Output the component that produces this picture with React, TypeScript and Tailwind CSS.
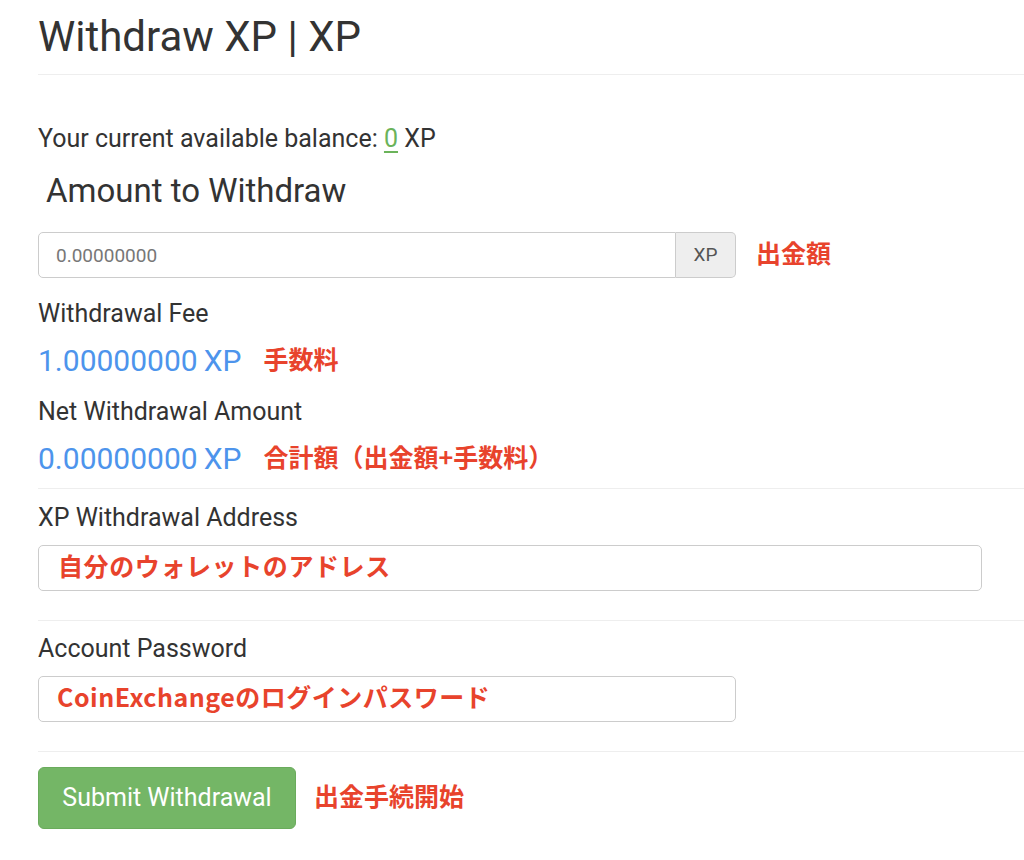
import { useState } from "react";

const latin = "font-['Roboto','Liberation_Sans',sans-serif]";
const note = "font-['Noto_Sans_CJK_JP','Noto_Sans',sans-serif] font-bold text-[#e8432c] leading-none pb-[6px]";

/**
 * A red Japanese annotation placed beside a field
 */
function Note(props: { text: string; className?: string }) {
    return <span className={`${note} ${props.className ?? ''}`}>{props.text}</span>;
}

function Divider() {
    return <div className="h-px bg-[#eeeeee]"/>;
}

export default function App() {
    const [ amount, setAmount ] = useState("");

    return (
        <div className={`${latin} bg-white text-[#333333] w-[1024px] h-[860px] overflow-hidden pl-[38px]`}>
            <div className="h-[74px] flex items-center">
                <h1 className="text-[42px] leading-none">Withdraw XP | XP</h1>
            </div>
            <Divider/>

            <div className="mt-[50px] h-[26px] flex items-center text-[25px] leading-none">
                <span>Your current available balance:&nbsp;</span>
                <a className="text-[#6bb35a] underline underline-offset-4">0</a>
                <span>&nbsp;XP</span>
            </div>

            <div className="mt-[21px] h-[36px] flex items-center pl-[8px] text-[33px] leading-none">
                Amount to Withdraw
            </div>

            <div className="mt-[24px] flex items-center gap-[20px]">
                <div className="flex w-[698px] h-[46px]">
                    <input
                        value={amount}
                        onChange={e => setAmount(e.target.value)}
                        placeholder="0.00000000"
                        className="grow min-w-0 h-full px-[17px] text-[19px] border border-[#cccccc] rounded-l-[5px] outline-none placeholder:text-[#777777]"
                    />
                    <span className="w-[60px] h-full flex items-center justify-center text-[19px] text-[#555555] bg-[#eeeeee] border border-l-0 border-[#cccccc] rounded-r-[5px]">
                        XP
                    </span>
                </div>
                <Note text="出金額" className="text-[25px]"/>
            </div>

            <div className="mt-[22px] h-[26px] flex items-center text-[25px] leading-none">Withdrawal Fee</div>
            <div className="mt-[20px] h-[30px] flex items-center gap-[22px]">
                <span className="text-[30px] leading-none text-[#4d94ec]">1.00000000<span className="ml-[6px]">XP</span></span>
                <Note text="手数料" className="text-[25px]"/>
            </div>

            <div className="mt-[22px] h-[26px] flex items-center text-[25px] leading-none">Net Withdrawal Amount</div>
            <div className="mt-[20px] h-[30px] flex items-center gap-[22px]">
                <span className="text-[30px] leading-none text-[#4d94ec]">0.00000000<span className="ml-[6px]">XP</span></span>
                <Note text="合計額（出金額+手数料）" className="text-[25px]"/>
            </div>

            <div className="mt-[14px]"><Divider/></div>

            <div className="mt-[15px] h-[26px] flex items-center text-[25px] leading-none">XP Withdrawal Address</div>
            <div className="mt-[15px] w-[944px] h-[46px] flex items-center px-[19px] border border-[#cccccc] rounded-[5px]">
                <Note text="自分のウォレットのアドレス" className="text-[25px] tracking-[0.6px]"/>
            </div>

            <div className="mt-[29px]"><Divider/></div>

            <div className="mt-[14px] h-[26px] flex items-center text-[25px] leading-none">Account Password</div>
            <div className="mt-[15px] w-[698px] h-[46px] flex items-center px-[18px] border border-[#cccccc] rounded-[5px]">
                <Note text="CoinExchangeのログインパスワード" className="text-[25px] tracking-[0.5px]"/>
            </div>

            <div className="mt-[29px]"><Divider/></div>

            <div className="mt-[15px] flex items-center gap-[18px]">
                <button className="w-[258px] h-[62px] rounded-[6px] bg-[#74b666] border border-[#6aab5c] text-white text-[25px]">
                    Submit Withdrawal
                </button>
                <Note text="出金手続開始" className="text-[25px]"/>
            </div>
        </div>
    );
}
